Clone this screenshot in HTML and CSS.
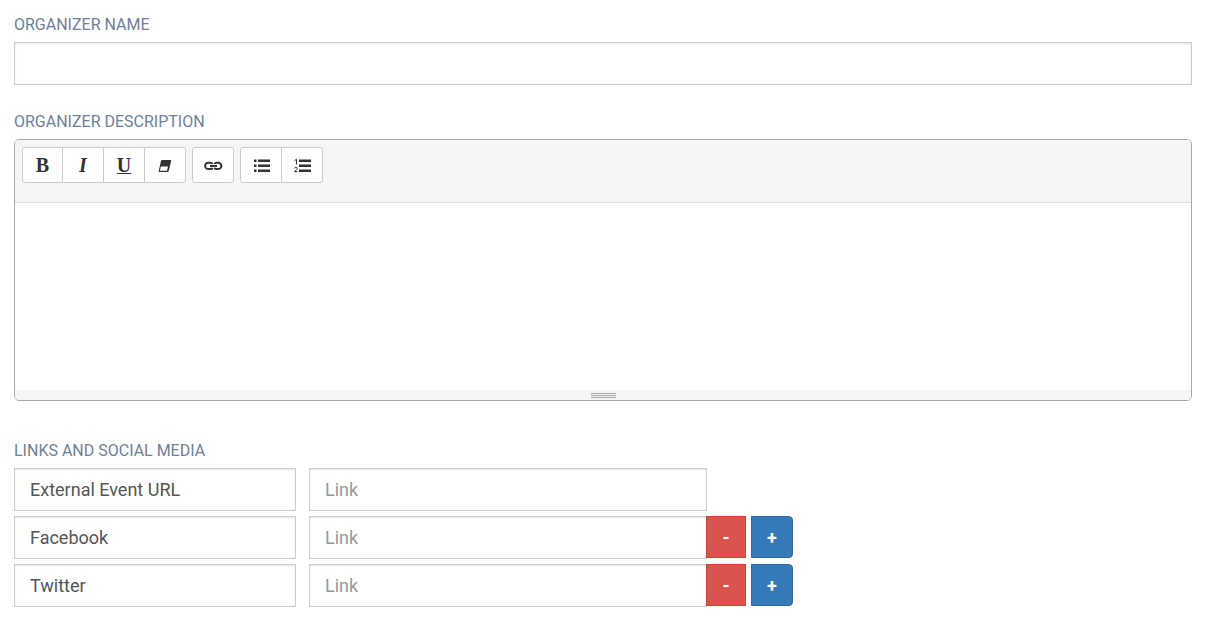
FILE: index.html
```html
<!DOCTYPE html>
<html lang="en">
<head>
<meta charset="utf-8">
<meta name="viewport" content="width=device-width, initial-scale=1">
<title>Organizer</title>
<link rel="stylesheet" href="styles.css">
</head>
<body>
<form class="organizer-form">
  <div class="field">
    <label class="field-label" for="organizer-name">ORGANIZER NAME</label>
    <input class="text-input" id="organizer-name" type="text">
  </div>

  <div class="field">
    <label class="field-label" for="organizer-description">ORGANIZER DESCRIPTION</label>
    <div class="editor">
      <div class="toolbar" role="toolbar" aria-label="Formatting">
        <div class="tool-group">
          <button class="tool tool-bold" type="button" aria-label="Bold">B</button>
          <button class="tool tool-italic" type="button" aria-label="Italic">I</button>
          <button class="tool tool-underline" type="button" aria-label="Underline">U</button>
          <button class="tool" type="button" aria-label="Remove formatting">
            <svg class="icon" viewBox="0 0 20 20" aria-hidden="true"><path d="M7 5h8.500q.9 0 .7.800l-2.400 10q-.3 1.200-1.500 1.200H4.500q-1 0-.8-.9L5.900 6.200Q6.100 5 7 5z" fill="#333"/><path d="M5.800 11.500h7.200l-1 4.300H4.900z" fill="#fff"/></svg>
          </button>
        </div>
        <div class="tool-group">
          <button class="tool" type="button" aria-label="Insert link">
            <svg class="icon" viewBox="0 0 20 20" aria-hidden="true"><path d="M9.500 9Q9 7.700 7.500 7.700H5.300a3.200 3.200 0 0 0 0 6.400H7.500Q9 14.100 9.500 12.800M11.500 9Q12 7.700 13.500 7.700h1.700a3.200 3.200 0 0 1 0 6.400H13.500Q12 14.100 11.500 12.800M7 10.900h7" fill="none" stroke="#333" stroke-width="2"/></svg>
          </button>
        </div>
        <div class="tool-group">
          <button class="tool" type="button" aria-label="Bulleted list">
            <svg class="icon" viewBox="0 0 20 20" aria-hidden="true"><path d="M3 4.500h2.500v2.500H3zM3 9.500h2.500v2.500H3zM3 14.500h2.500v2.500H3zM7 4.500h12v2.500H7zM7 9.500h12v2.500H7zM7 14.500h12v2.500H7z" fill="#333"/></svg>
          </button>
          <button class="tool" type="button" aria-label="Numbered list">
            <svg class="icon" viewBox="0 0 20 20" aria-hidden="true"><path d="M7 4.500h12v2.500H7zM7 9.500h12v2.500H7zM7 14.500h12v2.500H7z" fill="#333"/><path d="M2.500 5.500 4.500 4.300V9.500M2.500 13.500q.2-1.200 1.400-1.200c1.500 0 1.700 1.400.6 2.300l-2 2h3" fill="none" stroke="#333"/></svg>
          </button>
        </div>
      </div>
      <textarea class="editor-body" id="organizer-description"></textarea>
      <div class="resize-bar"><span class="grip"></span></div>
    </div>
  </div>

  <fieldset class="field links">
    <legend class="field-label">LINKS AND SOCIAL MEDIA</legend>
    <div class="link-row">
      <input class="text-input" type="text" value="External Event URL" aria-label="Link name">
      <input class="text-input" type="text" placeholder="Link" aria-label="External Event URL link">
    </div>
    <div class="link-row">
      <input class="text-input" type="text" value="Facebook" aria-label="Link name">
      <input class="text-input" type="text" placeholder="Link" aria-label="Facebook link">
      <div class="row-actions">
        <button class="action remove" type="button" aria-label="Remove Facebook">-</button>
        <button class="action add" type="button" aria-label="Add link after Facebook">+</button>
      </div>
    </div>
    <div class="link-row">
      <input class="text-input" type="text" value="Twitter" aria-label="Link name">
      <input class="text-input" type="text" placeholder="Link" aria-label="Twitter link">
      <div class="row-actions">
        <button class="action remove" type="button" aria-label="Remove Twitter">-</button>
        <button class="action add" type="button" aria-label="Add link after Twitter">+</button>
      </div>
    </div>
  </fieldset>
</form>
</body>
</html>
```

FILE: styles.css
```css
* {
  box-sizing: border-box;
}

body {
  margin: 0;
  background: #fff;
  color: #555;
  font: 18px/24px Roboto, sans-serif;
}

.organizer-form {
  padding: 14px 30px 14px 14px;
}

.field {
  margin: 0 0 26px;
}

.field-label {
  display: block;
  margin-bottom: 6px;
  padding: 0;
  color: #708096;
  font-size: 16px;
  line-height: 22px;
}

.text-input {
  display: block;
  width: 100%;
  min-width: 0;
  height: 43px;
  padding: 8px 15px;
  border: 1px solid #ccc;
  border-radius: 0;
  background: #fff;
  box-shadow: inset 0 1px 2px rgba(0, 0, 0, 0.1);
  color: #555;
  font: inherit;
}

.text-input::placeholder {
  color: #999;
  opacity: 1;
}

.editor {
  overflow: hidden;
  border: 1px solid #a9a9a9;
  border-radius: 5px;
}

.toolbar {
  display: flex;
  gap: 6px;
  padding: 7px 7px 19px;
  border-bottom: 1px solid #ddd;
  background: #f5f5f5;
}

.tool-group {
  display: flex;
}

.tool {
  display: flex;
  align-items: center;
  justify-content: center;
  width: 42px;
  height: 36px;
  padding: 0;
  border: 1px solid #ccc;
  background: #fff;
  color: #333;
  font: bold 20px/24px "Liberation Serif", serif;
}

.tool + .tool {
  margin-left: -1px;
}

.tool:first-child {
  border-radius: 3px 0 0 3px;
}

.tool:last-child {
  border-radius: 0 3px 3px 0;
}

.tool:only-child {
  border-radius: 3px;
}

.tool-bold {
  width: 41px;
}

.tool-italic {
  font-style: italic;
}

.tool-underline {
  text-decoration: underline;
  text-decoration-thickness: 1px;
}

.icon {
  width: 20px;
  height: 20px;
}

.editor-body {
  display: block;
  width: 100%;
  height: 187px;
  padding: 10px;
  border: 0;
  background: #fff;
  color: inherit;
  font: inherit;
  resize: none;
}

.resize-bar {
  display: flex;
  justify-content: center;
  padding: 3px 0 2px;
  background: #f5f5f5;
}

.grip {
  width: 25px;
  height: 5px;
  border: solid #a9a9a9;
  border-width: 1px 0;
  background: linear-gradient(#a9a9a9, #a9a9a9) center / 100% 1px no-repeat;
}

.links {
  min-width: 0;
  margin: 39px 0 0;
  padding: 0;
  border: 0;
}

.link-row {
  display: grid;
  grid-template-columns: 141fr 199fr 236fr;
  column-gap: 13px;
}

.link-row + .link-row {
  margin-top: 5px;
}

.row-actions {
  display: flex;
  gap: 5px;
  margin-left: -14px;
}

.action {
  width: 40px;
  height: 42px;
  padding: 2px 0 0;
  border: 1px solid #d43f3a;
  background: #d9534f;
  color: #fff;
  font: bold 18px/24px Roboto, sans-serif;
}

.add {
  width: 42px;
  border-color: #2e6da4;
  border-radius: 0 4px 4px 0;
  background: #337ab7;
}
```
